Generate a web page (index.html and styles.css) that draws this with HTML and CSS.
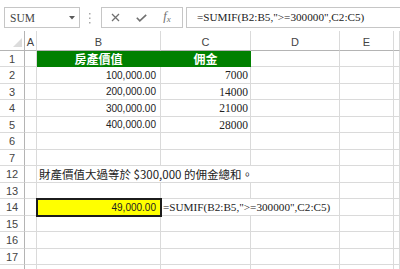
FILE: index.html
```html
<!DOCTYPE html>
<html lang="zh-Hant">
<head>
    <meta charset="UTF-8">
    <meta name="viewport" content="width=device-width, initial-scale=1.0">
    <title>SUMIF</title>
    <link rel="stylesheet" href="styles.css">
</head>
<body>
    <div class="formula-bar">
        <div class="name-box">
            <span>SUM</span>
            <svg class="name-arrow" width="6" height="4" viewBox="0 0 6 4"><path d="M0 0h6L3 3.5z" fill="#5a5a5a"/></svg>
        </div>
        <svg class="grip" width="2" height="11" viewBox="0 0 2 11">
            <rect x="0" y="0" width="1.5" height="1.5" fill="#a8a8a8"/>
            <rect x="0" y="4.5" width="1.5" height="1.5" fill="#a8a8a8"/>
            <rect x="0" y="9" width="1.5" height="1.5" fill="#a8a8a8"/>
        </svg>
        <div class="fx-buttons">
            <span class="fx-btn">
                <svg width="9" height="9" viewBox="0 0 9 9"><path d="M1 1l7 7M8 1L1 8" stroke="#707070" stroke-width="1.3" fill="none"/></svg>
            </span>
            <span class="fx-btn">
                <svg width="11" height="8" viewBox="0 0 11 8"><path d="M0.8 3.8l3 3L10.2 0.8" stroke="#707070" stroke-width="1.6" fill="none"/></svg>
            </span>
            <span class="fx-btn fx-label">f<small>x</small></span>
        </div>
        <div class="formula-input">=SUMIF(B2:B5,"&gt;=300000",C2:C5)</div>
    </div>

    <div class="sheet">
        <div class="corner"><span class="corner-tri"></span></div>
        <div class="col-head">A</div>
        <div class="col-head">B</div>
        <div class="col-head">C</div>
        <div class="col-head">D</div>
        <div class="col-head">E</div>
        <div class="col-head"></div>

        <div class="row-head">1</div>
        <div class="cell"></div>
        <div class="cell title">房產價值</div>
        <div class="cell title">佣金</div>
        <div class="cell"></div><div class="cell"></div><div class="cell"></div>

        <div class="row-head">2</div>
        <div class="cell"></div>
        <div class="cell money">100,000.00</div>
        <div class="cell plain">7000</div>
        <div class="cell"></div><div class="cell"></div><div class="cell"></div>

        <div class="row-head">3</div>
        <div class="cell"></div>
        <div class="cell money">200,000.00</div>
        <div class="cell plain">14000</div>
        <div class="cell"></div><div class="cell"></div><div class="cell"></div>

        <div class="row-head">4</div>
        <div class="cell"></div>
        <div class="cell money">300,000.00</div>
        <div class="cell plain">21000</div>
        <div class="cell"></div><div class="cell"></div><div class="cell"></div>

        <div class="row-head">5</div>
        <div class="cell"></div>
        <div class="cell money">400,000.00</div>
        <div class="cell plain">28000</div>
        <div class="cell"></div><div class="cell"></div><div class="cell"></div>

        <div class="row-head">6</div>
        <div class="cell"></div><div class="cell"></div><div class="cell"></div>
        <div class="cell"></div><div class="cell"></div><div class="cell"></div>

        <div class="row-head">7</div>
        <div class="cell"></div><div class="cell"></div><div class="cell"></div>
        <div class="cell"></div><div class="cell"></div><div class="cell"></div>

        <div class="row-head">12</div>
        <div class="cell"></div>
        <div class="cell note span-3">財產價值大過等於 $300,000 的佣金總和。</div>
        <div class="cell"></div><div class="cell"></div>

        <div class="row-head">13</div>
        <div class="cell"></div><div class="cell"></div><div class="cell"></div>
        <div class="cell"></div><div class="cell"></div><div class="cell"></div>

        <div class="row-head">14</div>
        <div class="cell"></div>
        <div class="cell money result">49,000.00</div>
        <div class="cell formula span-2">=SUMIF(B2:B5,"&gt;=300000",C2:C5)</div>
        <div class="cell"></div><div class="cell"></div>

        <div class="row-head">15</div>
        <div class="cell"></div><div class="cell"></div><div class="cell"></div>
        <div class="cell"></div><div class="cell"></div><div class="cell"></div>

        <div class="row-head">16</div>
        <div class="cell"></div><div class="cell"></div><div class="cell"></div>
        <div class="cell"></div><div class="cell"></div><div class="cell"></div>

        <div class="row-head">17</div>
        <div class="cell"></div><div class="cell"></div><div class="cell"></div>
        <div class="cell"></div><div class="cell"></div><div class="cell"></div>

        <div class="row-head"></div>
        <div class="cell"></div><div class="cell"></div><div class="cell"></div>
        <div class="cell"></div><div class="cell"></div><div class="cell"></div>
    </div>
</body>
</html>
```

FILE: styles.css
```css
:root {
    --grid-line: #dadada;
    --head-line: #b4b4b4;
    --box-line: #c6c6c6;
    --head-text: #444;
    --green: #008000;
    --yellow: #ffff00;
}

* {
    box-sizing: border-box;
}

body {
    margin: 0;
    background: #fff;
    font-family: "Liberation Sans", Arial, sans-serif;
    overflow: hidden;
}

/* formula bar */
.formula-bar {
    display: flex;
    align-items: flex-start;
    height: 31px;
    padding: 7px 0 0 4px;
}

.name-box {
    display: flex;
    align-items: center;
    justify-content: space-between;
    width: 76px;
    height: 21px;
    padding: 0 4px 0 5px;
    border: 1px solid var(--box-line);
    font-family: "Liberation Serif", serif;
    font-size: 11.5px;
    color: #444;
}

.name-arrow {
    margin-top: 1px;
}

.grip {
    margin: 6px 0 0 9px;
}

.fx-buttons {
    display: flex;
    width: 82px;
    height: 21px;
    margin-left: 10px;
    border: 1px solid var(--box-line);
}

.fx-btn {
    display: flex;
    align-items: center;
    justify-content: center;
    width: 26px;
}

.fx-label {
    font-family: "Liberation Serif", serif;
    font-style: italic;
    font-size: 12.5px;
    color: #707070;
    padding-bottom: 2px;
}

.fx-label small {
    font-size: 9px;
    margin-top: 4px;
}

.formula-input {
    flex: 1;
    height: 21px;
    margin-left: 3px;
    padding-left: 10px;
    border: 1px solid var(--box-line);
    border-right: none;
    font-family: "Liberation Serif", serif;
    font-size: 11.2px;
    line-height: 19px;
    color: #222;
    white-space: nowrap;
}

/* sheet grid */
.sheet {
    display: grid;
    grid-template-columns: 25px 12px 124px 90px 89px 54px 1fr;
    grid-template-rows: 20px 16px 17px 16px 17px 16px 17px 16px 17px 16px 17px 16px 17px 16px 16px;
}

.corner {
    position: relative;
    border-right: 1px solid var(--head-line);
    border-bottom: 1px solid var(--head-line);
}

.corner-tri {
    position: absolute;
    right: 2px;
    bottom: 3px;
    width: 0;
    height: 0;
    border-left: 9px solid transparent;
    border-bottom: 9px solid #dcdcdc;
}

.col-head {
    display: flex;
    align-items: center;
    justify-content: center;
    padding-top: 2px;
    border-right: 1px solid var(--grid-line);
    border-bottom: 1px solid var(--head-line);
    font-size: 11px;
    color: var(--head-text);
}

.row-head {
    display: flex;
    align-items: center;
    justify-content: center;
    border-right: 1px solid var(--head-line);
    border-bottom: 1px solid var(--grid-line);
    font-size: 11px;
    color: var(--head-text);
}

.cell {
    display: flex;
    align-items: center;
    border-right: 1px solid var(--grid-line);
    border-bottom: 1px solid var(--grid-line);
    white-space: nowrap;
    color: #222;
}

.span-2 {
    grid-column: span 2;
}

.span-3 {
    grid-column: span 3;
}

.title {
    justify-content: center;
    background: var(--green);
    border-color: var(--green);
    color: #fff;
    font-family: "Noto Sans CJK TC", sans-serif;
    font-weight: 700;
    font-size: 12px;
}

.money {
    justify-content: flex-end;
    padding-right: 4px;
    font-size: 10px;
}

.plain {
    justify-content: flex-end;
    padding-right: 2px;
    font-family: "Liberation Serif", serif;
    font-size: 11.5px;
}

.note {
    padding-left: 2px;
    font-family: "Noto Sans CJK TC", sans-serif;
    font-size: 11.5px;
}

.formula {
    padding-left: 2px;
    font-family: "Liberation Serif", serif;
    font-size: 11.2px;
}

.result {
    position: relative;
    background: var(--yellow);
    border: 1px solid #1c1c1c;
    box-shadow: 0 0 0 1px #1c1c1c;
}
```
